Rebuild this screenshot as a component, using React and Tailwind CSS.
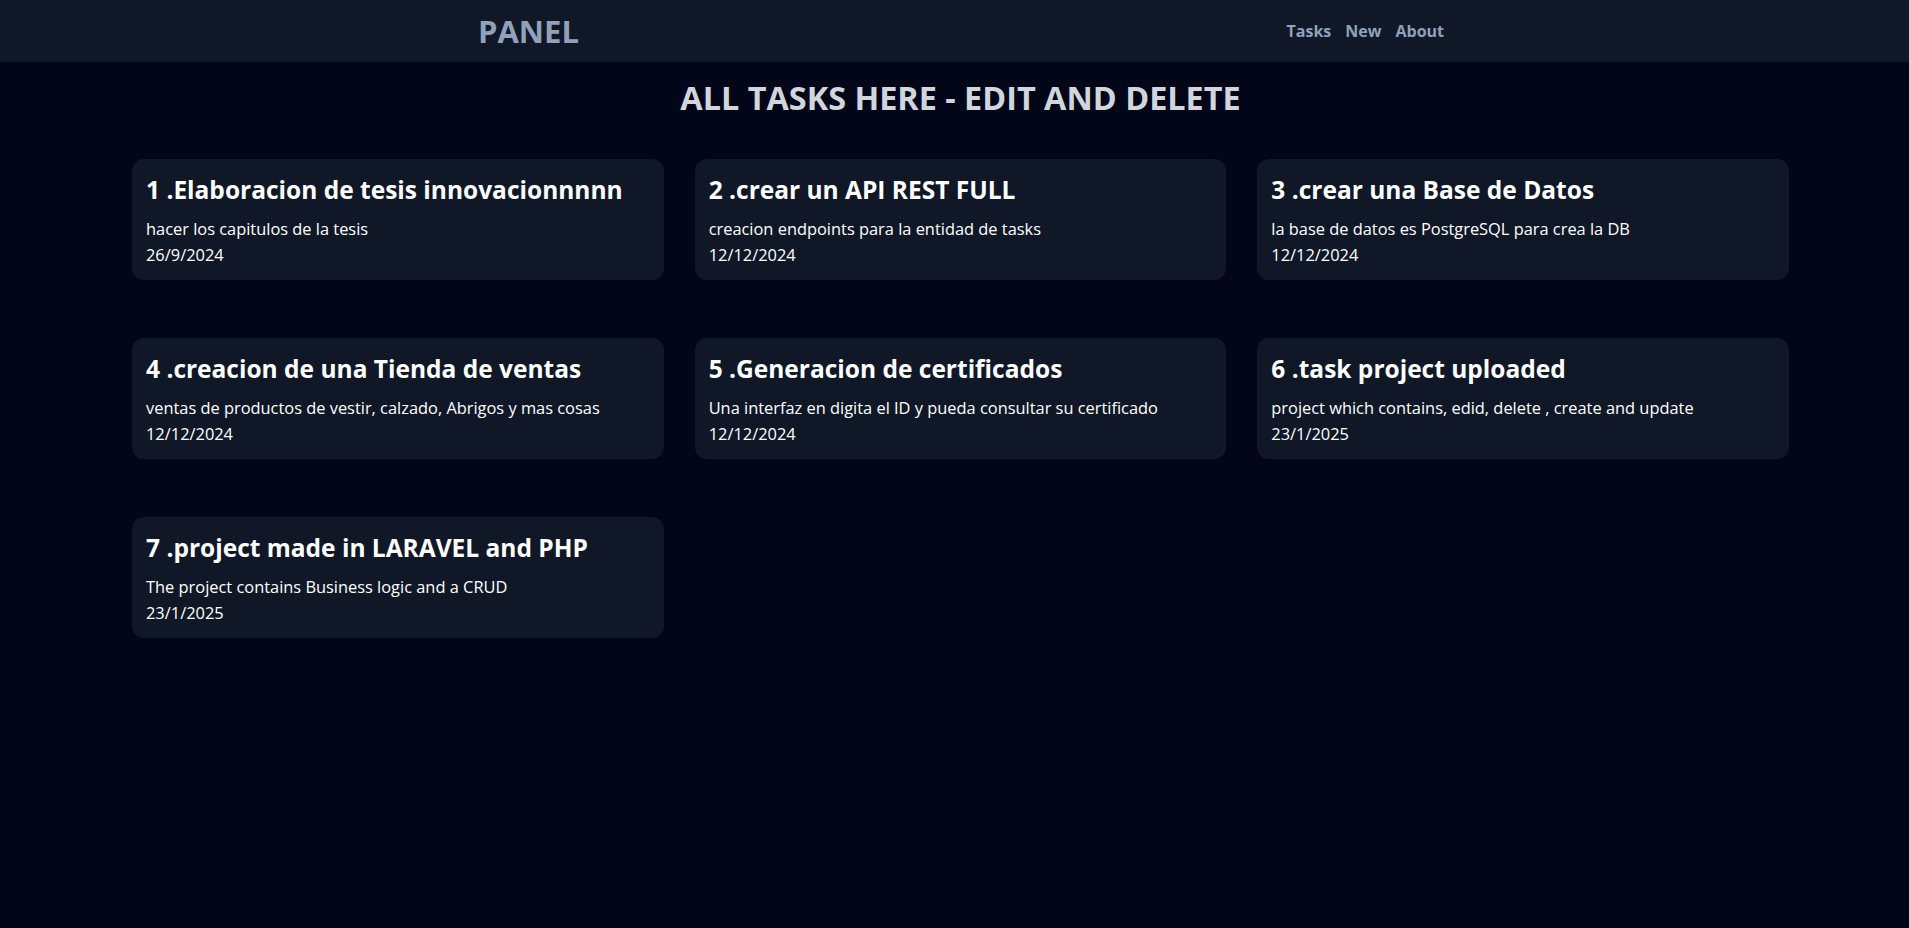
import React from "react";

const tasks = [
  { id: 1, title: "Elaboracion de tesis innovacionnnnn", desc: "hacer los capitulos de la tesis", date: "26/9/2024" },
  { id: 2, title: "crear un API REST FULL", desc: "creacion endpoints para la entidad de tasks", date: "12/12/2024" },
  { id: 3, title: "crear una Base de Datos", desc: "la base de datos es PostgreSQL para crea la DB", date: "12/12/2024" },
  { id: 4, title: "creacion de una Tienda de ventas", desc: "ventas de productos de vestir, calzado, Abrigos y mas cosas", date: "12/12/2024" },
  { id: 5, title: "Generacion de certificados", desc: "Una interfaz en digita el ID y pueda consultar su certificado", date: "12/12/2024" },
  { id: 6, title: "task project uploaded", desc: "project which contains, edid, delete , create and update", date: "23/1/2025" },
  { id: 7, title: "project made in LARAVEL and PHP", desc: "The project contains Business logic and a CRUD", date: "23/1/2025" },
];

export default function App() {
  return (
    <div
      className="min-h-[928px] bg-[#020618] text-white"
      style={{ fontFamily: '"Open Sans", "Noto Sans", sans-serif' }}
    >
      <header className="h-[62px] bg-[#101828] flex items-center justify-between pl-[478px] pr-[465px]">
        <a className="text-[31px] font-bold text-[#90a1b9] leading-10">PANEL</a>
        <nav className="flex items-center gap-[14px] text-base font-bold text-[#90a1b9]">
          <a>Tasks</a>
          <a>New</a>
          <a>About</a>
        </nav>
      </header>
      <h1 className="mt-[15px] mb-[42px] pl-[12px] text-center text-[32.4px] font-bold leading-10 text-[#d1d5dc]">
        ALL TASKS HERE - EDIT AND DELETE
      </h1>
      <div className="grid grid-cols-3 gap-x-[31px] gap-y-[58px] pl-[132px] pr-[120px]">
        {tasks.map((t) => (
          <div key={t.id} className="bg-[#101828] rounded-xl px-[14px] pt-[15px] pb-[13px]">
            <h2 className="text-[24.5px] font-bold leading-8 mb-[11px]">
              {t.id} .{t.title}
            </h2>
            <p className="text-[16.4px] leading-6">{t.desc}</p>
            <p className="text-[16.4px] leading-6 mt-[2px]">{t.date}</p>
          </div>
        ))}
      </div>
    </div>
  );
}
